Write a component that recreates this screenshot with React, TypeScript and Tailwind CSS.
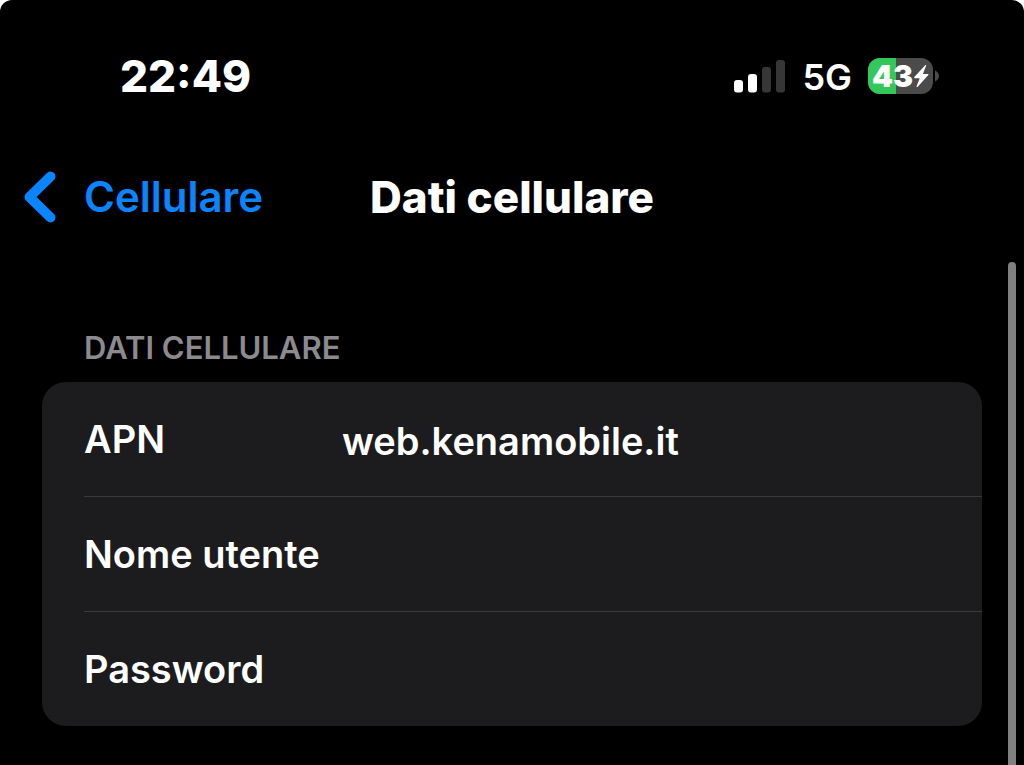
import React from 'react';

const fields = [
  { id: 'apn', label: 'APN', value: 'web.kenamobile.it' },
  { id: 'username', label: 'Nome utente', value: '' },
  { id: 'password', label: 'Password', value: '' }
];

const SignalIcon: React.FC = () => (
  <svg width="52" height="34" viewBox="0 0 52 34" aria-hidden="true">
    <rect x="0" y="21" width="9" height="12.500" rx="3" fill="#fff" />
    <rect x="14" y="15" width="9" height="18.500" rx="3" fill="#fff" />
    <rect x="28" y="8" width="9" height="25.500" rx="3" fill="#363636" />
    <rect x="42" y="1" width="9" height="32.500" rx="3" fill="#363636" />
  </svg>
);

const BoltIcon: React.FC = () => (
  <svg width="16" height="24" viewBox="0 0 16 24" aria-hidden="true">
    <path
      d="M12.2 1.2 1.3 13.1c-.4.5-.1 1.1.5 1.1h4.9L3.6 22.3c-.3.7.4 1.1.9.6l10.8-12c.4-.5.1-1-.5-1H9.9l3.2-8.1c.3-.7-.4-1.100-.9-.6Z"
      fill="#fff"
    />
  </svg>
);

const Battery: React.FC<{ level: number }> = ({ level }) => (
  <div className="flex items-center gap-[2px]">
    <div className="relative flex h-9 w-[65px] items-center justify-center overflow-hidden rounded-xl bg-[#4b4b4b]">
      <div className="absolute inset-y-0 left-0 bg-[#34c759]" style={{ width: `${level}%` }} />
      <span className="relative text-[30px] leading-9 font-black">{level}</span>
      <span className="relative">
        <BoltIcon />
      </span>
    </div>
    <svg width="4" height="12" viewBox="0 0 4 12" aria-hidden="true">
      <path d="M0 0.500C2.300 1.500 4 3.500 4 6S2.300 10.500 0 11.500Z" fill="#4b4b4b" />
    </svg>
  </div>
);

const App: React.FC = () => {
  return (
    <div className="min-h-screen bg-white font-['Inter','Liberation_Sans',sans-serif]">
      <div className="flex min-h-screen flex-col rounded-t-xl bg-black text-white">
        {/* Status bar */}
        <div className="flex h-[152px] items-center justify-between pr-[85px] pl-[120px]">
          <time className="text-[44px] leading-none font-extrabold">22:49</time>
          <div className="flex items-center gap-4">
            <SignalIcon />
            <span className="pt-[2px] text-4xl leading-none font-semibold">5G</span>
            <Battery level={43} />
          </div>
        </div>

        {/* Navigation */}
        <header className="grid h-[90px] grid-cols-[1fr_auto_1fr] items-center px-6">
          <a href="#cellulare" className="flex items-center gap-7 text-[42px] leading-none font-semibold text-[#0a84ff]">
            <svg width="32" height="52" viewBox="0 0 32 52" fill="none" aria-hidden="true">
              <path
                d="M26.500 5.500 5.500 26l21 20.500"
                stroke="currentColor"
                strokeWidth="10"
                strokeLinecap="round"
                strokeLinejoin="round"
              />
            </svg>
            Cellulare
          </a>
          <h1 className="text-[44px] leading-none font-extrabold">Dati cellulare</h1>
        </header>

        <main className="relative flex-1 px-[42px] pt-[88px] pb-10">
          <h2 className="mb-4 px-[42px] text-[31px] leading-9 font-semibold text-[#8a8a8f] uppercase">Dati cellulare</h2>

          <form className="overflow-hidden rounded-3xl bg-[#1c1c1e] pl-[42px]">
            {fields.map((field) => (
              <div
                key={field.id}
                className="flex h-[115px] items-center border-b border-[#3a3a3c] last:h-[114px] last:border-b-0"
              >
                <label htmlFor={field.id} className="w-[258px] shrink-0 text-[38px] leading-none font-semibold">
                  {field.label}
                </label>
                <input
                  id={field.id}
                  type={field.id === 'password' ? 'password' : 'text'}
                  defaultValue={field.value}
                  className="h-full min-w-0 flex-1 bg-transparent pt-1 text-[38px] font-semibold outline-none"
                />
              </div>
            ))}
          </form>

          {/* Scroll indicator */}
          <div className="absolute top-5 right-2 bottom-0 w-2 rounded-t-full bg-[#808080]" />
        </main>
      </div>
    </div>
  );
};

export default App;
